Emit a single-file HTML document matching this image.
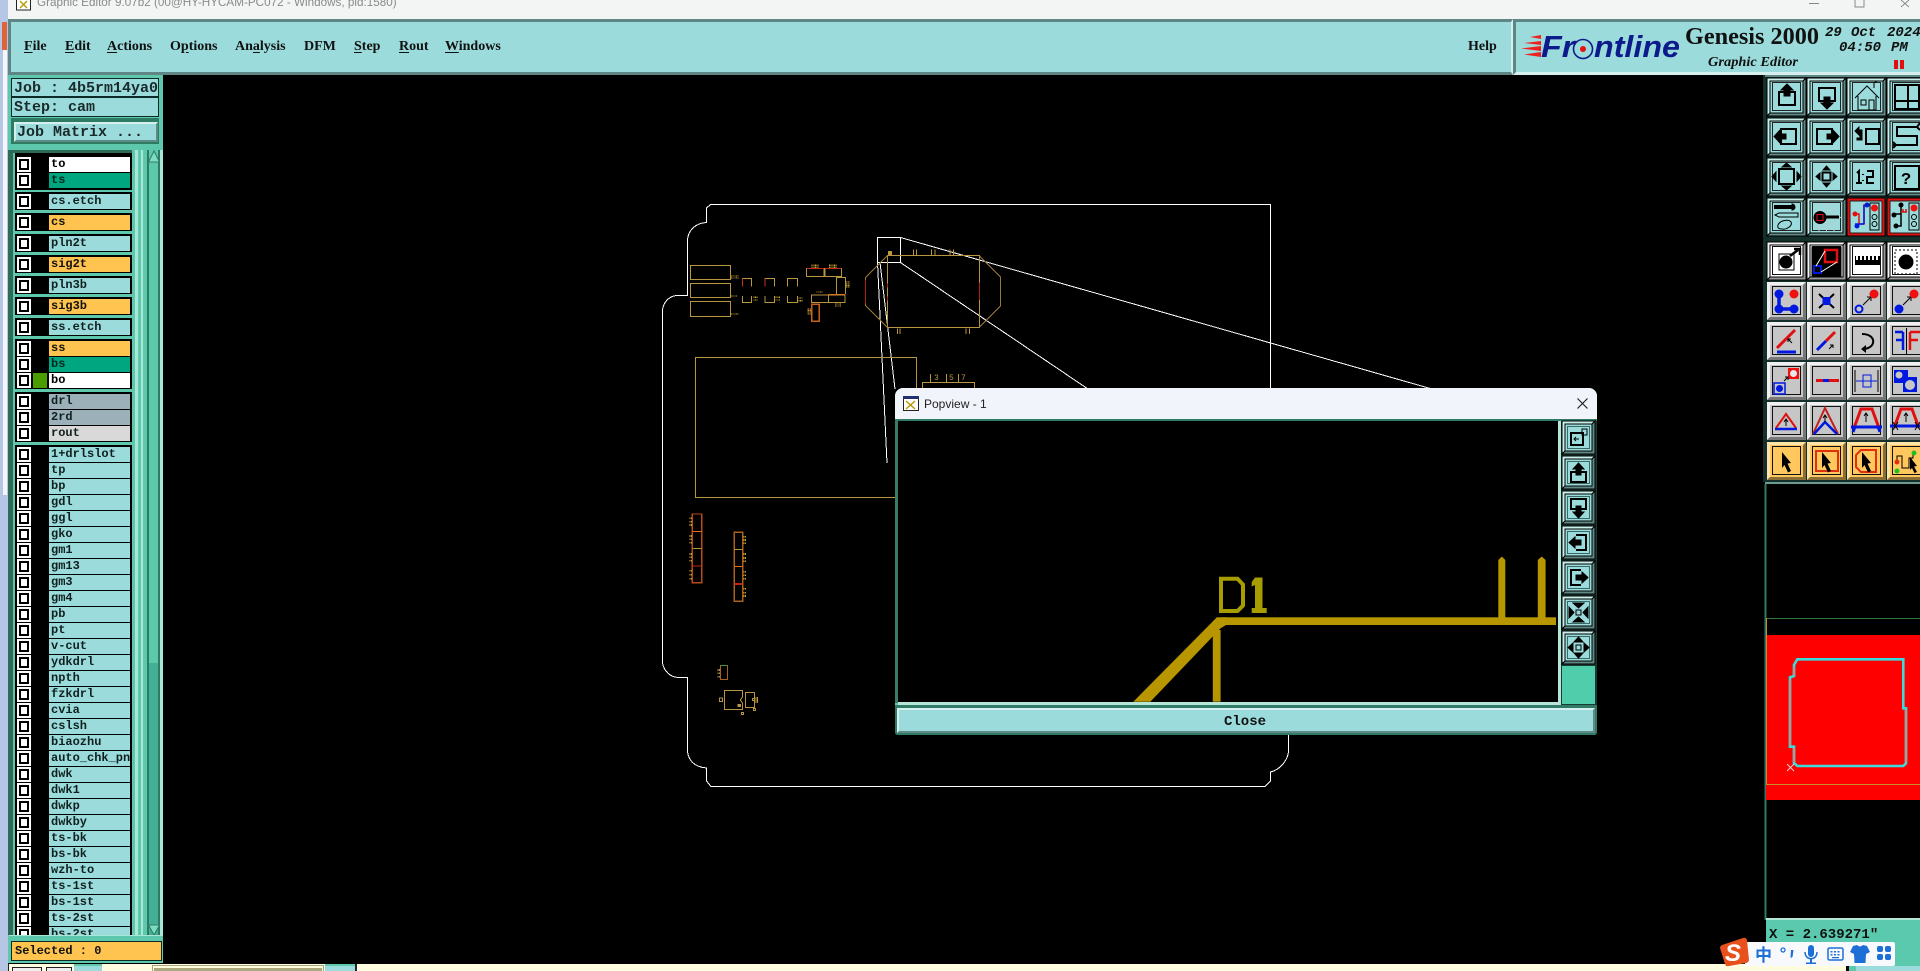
<!DOCTYPE html>
<html><head><meta charset="utf-8"><title>Graphic Editor</title>
<style>
html,body{margin:0;padding:0;width:1920px;height:971px;overflow:hidden;background:#000}
div,span,svg{position:absolute}
u{text-decoration:underline;text-underline-offset:2px}
.m{font:bold 14px "Liberation Serif",serif;color:#111;top:39px;white-space:nowrap}
.mono{font:bold 15px "Liberation Mono",monospace;color:#1a2a2a;white-space:pre}
.g{left:15px;width:117px;background:#000}
.r{left:0;width:132px;height:15px}
.r i{position:absolute;left:17px;top:0;width:14px;height:14.5px;background:#fff}
.r i:after{content:"";position:absolute;left:2px;top:2px;width:6px;height:6.5px;border:2px solid #000;background:#fff}
.r b{position:absolute;left:49px;top:0;width:79px;height:14.5px;padding-left:2px;background:#9bdbdb;overflow:hidden;font:bold 12px/15px "Liberation Mono",monospace;color:#10201f;white-space:pre}
.r b.w{background:#fff;color:#000}
.r b.t{background:#00a680;color:#00281e}
.r b.y{background:#ffc44f;color:#111}
.r b.s{background:#9bb0b8}
.r b.e{background:#d9d9d9}
</style></head>
<body>
<!-- left desktop strip -->
<div style="left:0;top:0;width:8px;height:971px;background:#b5c7e5"></div>
<div style="left:3px;top:50px;width:4px;height:445px;background:#f4f6fa"></div>
<div style="left:2px;top:22px;width:5px;height:28px;background:#e0643a"></div>
<!-- title bar -->
<div style="left:8px;top:0;width:1912px;height:19px;background:#f3f4f4;overflow:hidden">
  <span style="left:29px;top:-7px;font:11.7px/20px 'Liberation Sans',sans-serif;color:#8a8a8a;white-space:nowrap">Graphic Editor 9.07b2 (00@HY-HYCAM-PC072 - Windows, pid:1580)</span>
  <svg style="left:8px;top:0" width="16" height="12"><rect x=".5" y="-3" width="14" height="13" fill="#fff" stroke="#222"/><path d="M4 1L11 8M11 1L4 8" stroke="#b89a00" stroke-width="1.4"/></svg>
  <svg style="left:1790px;top:0" width="122" height="10"><path d="M11 3.5H21M57 0V7H66V0M103 0L111 7M111 0L103 7" fill="none" stroke="#888"/></svg>
</div>
<!-- menu bar -->
<div style="left:8px;top:19px;width:1505px;height:56px;background:#9bdbdb;box-sizing:border-box;border-top:3px solid #5f8585;border-left:3px solid #5f8585;border-bottom:3px solid #5f8585;border-right:2px solid #d5f0ee"></div>
<div class="m" style="left:24px"><u>F</u>ile</div>
<div class="m" style="left:65px"><u>E</u>dit</div>
<div class="m" style="left:107px"><u>A</u>ctions</div>
<div class="m" style="left:170px">O<u>p</u>tions</div>
<div class="m" style="left:235px">An<u>a</u>lysis</div>
<div class="m" style="left:304px">DFM</div>
<div class="m" style="left:354px"><u>S</u>tep</div>
<div class="m" style="left:399px"><u>R</u>out</div>
<div class="m" style="left:445px"><u>W</u>indows</div>
<div class="m" style="left:1468px">Help</div>
<!-- logo panel -->
<div style="left:1513px;top:19px;width:407px;height:56px;background:#9bdbdb;box-sizing:border-box;border-top:3px solid #5f8585;border-left:3px solid #5f8585;border-bottom:3px solid #d5f0ee"></div>
<svg style="left:1516px;top:19px" width="404" height="56" viewBox="1516 19 404 56">
  <path d="M1541 35L1530 37L1541 39ZM1541 41L1524 43L1541 45ZM1541 46L1521 48.500L1541 51ZM1541 52L1524 54.500L1541 57Z" fill="#f02020"/>
  <text x="1541" y="57" font-family="Liberation Sans" font-weight="bold" font-style="italic" font-size="31" fill="#0c1a8c" textLength="34" lengthAdjust="spacingAndGlyphs">Fr</text>
  <circle cx="1583" cy="49" r="9.500" fill="none" stroke="#0c1a8c" stroke-width="1.600"/><circle cx="1583" cy="49" r="3" fill="#e81010"/>
  <text x="1594" y="57" font-family="Liberation Sans" font-weight="bold" font-style="italic" font-size="31" fill="#0c1a8c" textLength="86" lengthAdjust="spacingAndGlyphs">ntline</text>
  <text x="1685" y="44" font-family="Liberation Serif" font-weight="bold" font-size="24" fill="#111" textLength="134" lengthAdjust="spacingAndGlyphs">Genesis 2000</text>
  <text x="1708" y="66" font-family="Liberation Serif" font-weight="bold" font-style="italic" font-size="14" fill="#111" textLength="90" lengthAdjust="spacingAndGlyphs">Graphic Editor</text>
  <g font-family="Liberation Mono" font-style="italic" font-weight="bold" font-size="14" fill="#111">
    <text x="1825" y="36">29</text><text x="1851" y="36">Oct</text><text x="1887" y="36">2024</text>
    <text x="1839" y="51">04:50</text><text x="1891" y="51">PM</text>
  </g>
  <rect x="1894" y="60" width="4" height="9" fill="#e01010"/><rect x="1900" y="60" width="4" height="9" fill="#e01010"/>
</svg>

<!-- left panel -->
<div style="left:8px;top:75px;width:155px;height:888px;background:#5ec8ad"></div>
<div style="left:8px;top:150px;width:5px;height:785px;background:#2e6b57"></div>
<div style="left:8px;top:150px;width:130px;height:3px;background:#2e6b57"></div>
<div style="left:11px;top:78px;width:148px;height:19px;background:#9bdbdb;border:1px solid #0c2a26;box-sizing:border-box"></div>
<div style="left:11px;top:97px;width:148px;height:20px;background:#9bdbdb;border:1px solid #0c2a26;box-sizing:border-box"></div>
<div class="mono" style="left:14px;top:79px;line-height:19px">Job : 4b5rm14ya0</div>
<div class="mono" style="left:14px;top:98px;line-height:20px">Step: cam</div>
<div style="left:11px;top:118px;width:148px;height:26px;background:#2e7b63"></div>
<div style="left:14px;top:122px;width:144px;height:20px;background:#9bdbdb;box-sizing:border-box;border-top:2px solid #d5f0ee;border-left:2px solid #d5f0ee;border-bottom:2px solid #5f8a86;border-right:2px solid #5f8a86"></div>
<div class="mono" style="left:17px;top:123px;line-height:20px">Job Matrix ...</div>

<!-- scrollbar columns -->
<div style="left:132px;top:150px;width:31px;height:785px;background:#5ec8ad"></div>
<div style="left:135px;top:150px;width:3px;height:785px;background:#a8e6d8"></div>
<div style="left:141px;top:150px;width:2px;height:785px;background:#a8e6d8"></div>
<div style="left:147px;top:150px;width:2px;height:785px;background:#2e7b63"></div>
<div style="left:158px;top:150px;width:2px;height:785px;background:#2e7b63"></div>
<div style="left:160px;top:150px;width:3px;height:785px;background:#a8e6d8"></div>
<div style="left:149px;top:663px;width:9px;height:272px;background:#45ae96"></div>
<svg style="left:147px;top:150px" width="14" height="16"><path d="M7 1L12.500 12H1.500Z" fill="#7edcc4" stroke="#2e7b63"/></svg>
<svg style="left:147px;top:924px" width="14" height="12"><path d="M7 11L12.500 1H1.500Z" fill="#7edcc4" stroke="#2e7b63"/></svg>

<!-- layer rows -->
<div style="left:0;top:150px;width:132px;height:785px;overflow:hidden">
<div style="left:0;top:0;width:132px;height:785px">
<div class="g" style="top:3px;height:37px"></div>
<div class="g" style="top:42px;height:18px"></div>
<div class="g" style="top:63px;height:18px"></div>
<div class="g" style="top:84px;height:18px"></div>
<div class="g" style="top:105px;height:18px"></div>
<div class="g" style="top:126px;height:18px"></div>
<div class="g" style="top:147px;height:18px"></div>
<div class="g" style="top:168px;height:18px"></div>
<div class="g" style="top:189px;height:50px"></div>
<div class="g" style="top:242px;height:50px"></div>
<div class="g" style="top:295px;height:490px"></div>
<div class="r" style="top:7px"><i></i><b class="w">to</b></div>
<div class="r" style="top:23px"><i></i><b class="t">ts</b></div>
<div class="r" style="top:44px"><i></i><b>cs.etch</b></div>
<div class="r" style="top:65px"><i></i><b class="y">cs</b></div>
<div class="r" style="top:86px"><i></i><b>pln2t</b></div>
<div class="r" style="top:107px"><i></i><b class="y">sig2t</b></div>
<div class="r" style="top:128px"><i></i><b>pln3b</b></div>
<div class="r" style="top:149px"><i></i><b class="y">sig3b</b></div>
<div class="r" style="top:170px"><i></i><b>ss.etch</b></div>
<div class="r" style="top:191px"><i></i><b class="y">ss</b></div>
<div class="r" style="top:207px"><i></i><b class="t">bs</b></div>
<div class="r" style="top:223px"><i></i><b class="w">bo</b></div>
<div style="left:33px;top:223px;width:14px;height:14.500px;background:#4b9c00"></div>
<div class="r" style="top:244px"><i></i><b class="s">drl</b></div>
<div class="r" style="top:260px"><i></i><b class="s">2rd</b></div>
<div class="r" style="top:276px"><i></i><b class="e">rout</b></div>
<div class="r" style="top:297px"><i></i><b>1+drlslot</b></div>
<div class="r" style="top:313px"><i></i><b>tp</b></div>
<div class="r" style="top:329px"><i></i><b>bp</b></div>
<div class="r" style="top:345px"><i></i><b>gdl</b></div>
<div class="r" style="top:361px"><i></i><b>ggl</b></div>
<div class="r" style="top:377px"><i></i><b>gko</b></div>
<div class="r" style="top:393px"><i></i><b>gm1</b></div>
<div class="r" style="top:409px"><i></i><b>gm13</b></div>
<div class="r" style="top:425px"><i></i><b>gm3</b></div>
<div class="r" style="top:441px"><i></i><b>gm4</b></div>
<div class="r" style="top:457px"><i></i><b>pb</b></div>
<div class="r" style="top:473px"><i></i><b>pt</b></div>
<div class="r" style="top:489px"><i></i><b>v-cut</b></div>
<div class="r" style="top:505px"><i></i><b>ydkdrl</b></div>
<div class="r" style="top:521px"><i></i><b>npth</b></div>
<div class="r" style="top:537px"><i></i><b>fzkdrl</b></div>
<div class="r" style="top:553px"><i></i><b>cvia</b></div>
<div class="r" style="top:569px"><i></i><b>cslsh</b></div>
<div class="r" style="top:585px"><i></i><b>biaozhu</b></div>
<div class="r" style="top:601px"><i></i><b>auto_chk_pnl</b></div>
<div class="r" style="top:617px"><i></i><b>dwk</b></div>
<div class="r" style="top:633px"><i></i><b>dwk1</b></div>
<div class="r" style="top:649px"><i></i><b>dwkp</b></div>
<div class="r" style="top:665px"><i></i><b>dwkby</b></div>
<div class="r" style="top:681px"><i></i><b>ts-bk</b></div>
<div class="r" style="top:697px"><i></i><b>bs-bk</b></div>
<div class="r" style="top:713px"><i></i><b>wzh-to</b></div>
<div class="r" style="top:729px"><i></i><b>ts-1st</b></div>
<div class="r" style="top:745px"><i></i><b>bs-1st</b></div>
<div class="r" style="top:761px"><i></i><b>ts-2st</b></div>
<div class="r" style="top:777px"><i></i><b>bs-2st</b></div>
</div></div>
<!-- selected -->
<div style="left:9px;top:935px;width:154px;height:28px;background:#5ec8ad;border-top:1px solid #a8e6d8;box-sizing:border-box"></div>
<div style="left:11px;top:941px;width:151px;height:20px;background:#ffc44f;border:1px solid #0c2a26;box-sizing:border-box"></div>
<div class="mono" style="left:15px;top:941px;font-size:12px;line-height:20px;color:#111">Selected : 0</div>

<!-- bottom strip -->
<div style="left:8px;top:964px;width:1912px;height:7px;background:#fffde0"></div>
<div style="left:8px;top:964px;width:1px;height:7px;background:#222"></div>
<div style="left:12px;top:967px;width:30px;height:4px;border-top:1px solid #222;border-left:1px solid #222;border-right:1px solid #222;box-sizing:border-box;background:#eee"></div>
<div style="left:46px;top:967px;width:26px;height:4px;border-top:1px solid #222;border-left:1px solid #222;border-right:1px solid #222;box-sizing:border-box;background:#eee"></div>
<div style="left:74px;top:964px;width:28px;height:7px;background:#9bdbdb;border-top:2px solid #5ec8ad;box-sizing:border-box"></div>
<div style="left:152px;top:965px;width:172px;height:6px;background:#fffde0;border:1px solid #a4a47a;border-bottom:0;box-sizing:border-box"></div>
<div style="left:154px;top:968px;width:168px;height:3px;background:#a8a880"></div>
<div style="left:325px;top:964px;width:30px;height:7px;background:#9bdbdb;border-top:2px solid #5ec8ad;box-sizing:border-box"></div>
<div style="left:355px;top:964px;width:2px;height:7px;background:#222"></div>
<div style="left:1846px;top:964px;width:74px;height:7px;background:#5ec8ad"></div>
<div style="left:1846px;top:966px;width:3px;height:5px;background:#000"></div>
<div style="left:1856px;top:966px;width:64px;height:5px;background:#9bdbdb"></div>

<!-- right toolbar background -->
<div style="left:1763px;top:75px;width:157px;height:407px;background:#15302a"></div>
<div style="left:1765px;top:75px;width:155px;height:2px;background:#5f8585"></div>
<div style="left:1765px;top:482px;width:155px;height:2px;background:#6f9a90"></div>

<!-- main svg: PCB + toolbar + minimap -->
<svg style="left:0;top:0" width="1920" height="971" viewBox="0 0 1920 971" fill="none">
<defs>
<g id="t"><rect width="39" height="38" fill="#9bdbdb"/><path d="M0 0H39L36 3H3V35L0 38Z" fill="#c9efec"/><path d="M39 0V38H0L3 35H36V3Z" fill="#5f8a86"/><rect x="5.500" y="4.500" width="28" height="28" stroke="#222"/></g>
<g id="a"><rect width="39" height="38" fill="#c6c6c6"/><path d="M0 0H39L36 3H3V35L0 38Z" fill="#f0f0f0"/><path d="M39 0V38H0L3 35H36V3Z" fill="#777"/><rect x="5.500" y="4.500" width="28" height="28" stroke="#111"/></g>
<g id="w"><rect width="39" height="38" fill="#fff"/><path d="M0 0H39L36 3H3V35L0 38Z" fill="#f2f2f2"/><path d="M39 0V38H0L3 35H36V3Z" fill="#999"/><rect x="5.500" y="4.500" width="28" height="28" stroke="#111"/></g>
<g id="o"><rect width="39" height="38" fill="#ffc85f"/><path d="M0 0H39L36 3H3V35L0 38Z" fill="#ffe4a8"/><path d="M39 0V38H0L3 35H36V3Z" fill="#8a6d35"/><rect x="5.500" y="4.500" width="28" height="28" stroke="#111"/></g>
<path id="cur" d="M0 0L9 11L5.500 11.500L9 19L6 20.500L2.500 13L0 16Z" fill="#000"/>
</defs>

<!-- PCB outline -->
<g stroke="#fff" stroke-width="1" shape-rendering="crispEdges">
<path d="M1270.500 389V204.500H710.500L706.500 208V222.500C695 223 688 231 687.500 240V295.500H677C669 296 663.500 302 662.500 310V663C664 671 670 677 678 677.500H687.500V752C689 761 695 767 706.500 768V781L711 786.500H1265L1270.500 781V772C1279 770 1287 762 1288.500 752V735"/>
<rect x="877.500" y="237.500" width="23" height="25"/>
<path d="M900.500 237.500L1432 389M900.500 262.500L1088 389M877.500 262.500L887 463M880 262.500L895 389"/>
</g>
<!-- PCB details (zoom 8 coord) -->
<g transform="translate(660,190) scale(.33333)" stroke="#b8963f" stroke-width="3" shape-rendering="crispEdges">
 <rect x="91" y="227" width="120" height="42"/><rect x="91" y="281" width="120" height="42"/><rect x="91" y="335" width="120" height="44"/>
 <path d="M248 290V265H275V290M248 318V338H275V318M315 290V265H343V290M315 318V338H343V318M382 290V265H412V290M382 318V338H412V318"/>
 <path d="M248 265V290M315 265V290" stroke="#c83018"/>
 <rect x="440" y="235" width="52" height="25"/><rect x="495" y="235" width="50" height="25"/>
 <path d="M440 236H492M495 236H545" stroke="#c02810"/>
 <path d="M530 312V262H557V312"/>
 <rect x="455" y="315" width="50" height="22"/><rect x="505" y="315" width="50" height="22"/>
 <path d="M505 314H555" stroke="#e87018"/>
 <rect x="455" y="343" width="23" height="51" stroke="#c8601a" stroke-width="4"/>
 <rect x="682" y="197" width="276" height="215"/>
 <path d="M682 197L617 262V347L682 412M958 197L1022 262V347L958 412" stroke="#9a7a35"/>
 <path d="M760 178V195M770 178V195M815 178V195M825 178V195M870 178V195M880 178V195M712 415V432M720 415V432M918 415V432M928 415V432"/>
 <path d="M617 270V340M958 278V330M682 280V292M682 320V332" stroke="#b02010"/>
 <rect x="685" y="185" width="9" height="9" fill="#c8a030"/>
 <rect x="106" y="503" width="664" height="419"/>
 <g stroke="#c8a030" stroke-width="4">
 <path d="M213 258h24M213 264h24M213 318h20M213 372h24M280 322h12M280 330h12M347 322h14M347 330h14M415 324h16M415 332h16M455 226h22M455 232h22M507 226h24M507 232h24M470 306h20M525 342h20M525 348h20M560 275v20M566 275v20M445 355v20M451 355v20" stroke-dasharray="3 2"/>
 </g>
</g>
<!-- above popup bit -->
<g stroke="#b8963f" stroke-width="1" shape-rendering="crispEdges"><path d="M922.500 389V382.500H974.500V389M930.500 382V374M946.500 382V374M958.500 382V374"/></g>
<g font-family="Liberation Mono" font-size="8" fill="#b8963f"><text x="934" y="380">3</text><text x="949" y="380">5</text><text x="961" y="380">7</text></g>
<!-- lower parts zoom 9 coord -->
<g transform="translate(660,490) scale(.33333)" stroke="#b8963f" stroke-width="3" shape-rendering="crispEdges">
 <rect x="97" y="72" width="28" height="206" stroke="#b84a1a" stroke-width="4"/>
 <path d="M97 124H125" stroke="#e87018"/><path d="M97 175H125"/><path d="M97 228H125" stroke="#c02810"/>
 <rect x="223" y="127" width="25" height="207" stroke="#a8601a" stroke-width="4"/>
 <path d="M223 178H248"/><path d="M223 230H248" stroke="#e87018"/><path d="M223 282H248" stroke="#c02810" stroke-width="6"/>
 <path d="M88 85h9M88 95h9M88 105h9M88 138h9M88 148h9M88 158h9M88 192h9M88 202h9M88 212h9M88 242h9M88 254h9M88 266h9M250 140h10M250 150h10M250 160h10M250 192h10M250 204h10M250 214h10M250 245h10M250 256h10M250 266h10M250 296h10M250 308h10M250 318h10" stroke-dasharray="3 2" stroke="#c8a030" stroke-width="5"/>
 <rect x="181" y="527" width="22" height="42" stroke="#a8601a"/><path d="M181 527H203" stroke="#3a9a30"/>
 <path d="M172 540h8M172 550h8M172 560h8" stroke-dasharray="3 2" stroke-width="5"/>
 <path d="M193 601H248V620L241 630L248 640V659H193Z"/>
 <rect x="256" y="607" width="28" height="46"/>
 <rect x="245" y="667" width="6" height="6"/><rect x="280" y="655" width="6" height="6"/>
 <rect x="178" y="624" width="10" height="10"/><rect x="234" y="643" width="8" height="7" fill="#b8963f"/><rect x="278" y="626" width="6" height="6"/>
 <path d="M286 624h10M286 630h10M286 636h10" stroke-dasharray="3 2" stroke-width="5"/>
</g>

<!-- minimap -->
<path d="M1765.500 484V920" stroke="#2f7b66" stroke-width="2"/>
<rect x="1766" y="635" width="154" height="165" fill="#fe0000"/>
<path d="M1766.500 618.500H1920" stroke="#2e7a3a"/>
<path d="M1766.500 618V784.500H1920" stroke="#c89020"/>
<path d="M1797.300 659.300H1903.300V708.300H1906V763.300L1903.300 766H1797.300L1794 763V746.700H1790V677.300L1794 676V665Z" stroke="#39dcdc" stroke-width="2.600"/>
<path d="M1794 668V675M1790 680V745M1794 748V762M1906 710V762" stroke="#a0a0a0" stroke-width="2.600"/>
<path d="M1787 764L1794 771M1794 764L1787 771" stroke="#f0d0d0"/>
<rect x="1766" y="918" width="154" height="46" fill="#5ac9ad"/>
<rect x="1766" y="918" width="154" height="2" fill="#b5e6d8"/>
<text x="1769" y="938" font-family="Liberation Mono" font-weight="bold" font-size="14" fill="#111">X = 2.639271"</text>

<!-- toolbar block 1 -->
<g stroke="#000" fill="none">
<g transform="translate(1767,78)"><use href="#t"/><rect x="12" y="14" width="16" height="13" stroke-width="2"/><path d="M20 6L26 12H23V18H17V12H14Z" fill="#000"/></g>
<g transform="translate(1807,78)"><use href="#t"/><rect x="12" y="10" width="16" height="13" stroke-width="2"/><path d="M20 31L26 25H23V19H17V25H14Z" fill="#000"/></g>
<g transform="translate(1847,78)"><use href="#t"/><path d="M8 20L20 8L32 20M11 18V32H29V18M14 22h5v5h-5zM22 22h5v10h-5zM27 10V5l3-2" /></g>
<g transform="translate(1887,78)"><use href="#t"/><path d="M8 7H32V31H8ZM8 23H32M21 7V31" stroke-width="2"/></g>

<g transform="translate(1767,118)"><use href="#t"/><rect x="14" y="11" width="15" height="15" stroke-width="2"/><path d="M7 18.500L13 12V16H19V21H13V25Z" fill="#000"/></g>
<g transform="translate(1807,118)"><use href="#t"/><rect x="10" y="11" width="15" height="15" stroke-width="2"/><path d="M32 18.500L26 12V16H20V21H26V25Z" fill="#000"/></g>
<g transform="translate(1847,118)"><use href="#t"/><rect x="19" y="11" width="13" height="15" stroke-width="2"/><path d="M8 13L12 9V12H15V22H10V20H13V15H12V17Z" fill="#000"/></g>
<g transform="translate(1887,118)"><use href="#t"/><path d="M30 9H10V18H30V27H6M33 5L30 9L33 12M6 24L9 27L6 30" stroke-width="2"/></g>

<g transform="translate(1767,158)"><use href="#t"/><rect x="12" y="11" width="15" height="15" stroke-width="2"/><path d="M19.500 5L24 9H15ZM19.500 32L24 28H15ZM5 18.500L9 14V23ZM34 18.500L30 14V23Z" fill="#000"/></g>
<g transform="translate(1807,158)"><use href="#t"/><rect x="15.500" y="14.500" width="8" height="8" stroke-width="2"/><path d="M19.500 8L23 12H16ZM19.500 29L23 25H16ZM9 18.500L13 15V22ZM30 18.500L26 15V22Z" fill="#000"/></g>
<g transform="translate(1847,158)"><use href="#t"/><path d="M10 15L12 13V25M9 25H15M16 16v1M16 22v1M20 13H26V19H20V25H27" stroke-width="2"/></g>
<g transform="translate(1887,158)"><use href="#t"/><rect x="8" y="8" width="24" height="23" stroke-width="2"/><text x="14" y="26" font-family="Liberation Mono" font-weight="bold" font-size="17" fill="#000" stroke="none">?</text></g>

<g transform="translate(1767,198)"><use href="#t"/><path d="M7 8H25M7 10H25" stroke-width="2"/><path d="M25 6a3 3 0 1 1 0 6z" fill="#000"/><path d="M8 17L12 15H31V19H12ZM11 27C13 22 22 21 24 24C26 28 19 32 15 31C12 31 10 30 11 27Z"/></g>
<g transform="translate(1807,198)"><use href="#t"/><path d="M19.500 5V33M6 19.500H34M12 5V33M27 5V33" stroke="#c0c8c8"/><path d="M16 19H32" stroke-width="3"/><circle cx="13" cy="19.500" r="6" fill="#000"/><rect x="10" y="16.500" width="6" height="6" stroke="#e01010"/></g>
<g transform="translate(1847,198)"><rect width="38" height="38" fill="#e01010"/><rect x="3" y="3" width="32" height="32" fill="#9bdbdb" stroke="#222"/><path d="M7 16H12V26H17V7H20M12 16L8 16" stroke="#e01010" stroke-width="1.500"/><path d="M17 7V26M17 26H8" stroke="#0018e0" stroke-width="1.500"/><circle cx="8" cy="16" r="2.500" fill="#e01010" stroke="none"/><circle cx="20" cy="7" r="2.500" fill="#0018e0" stroke="none"/><circle cx="10" cy="28" r="2.500" fill="#0018e0" stroke="none"/><rect x="23" y="5" width="9" height="27"/><circle cx="27.500" cy="10" r="3.500" fill="#f01010" stroke="none"/><circle cx="27.500" cy="19" r="2.500"/><circle cx="27.500" cy="26" r="2.500"/></g>
<g transform="translate(1887,198)"><rect width="38" height="38" fill="#e01010"/><rect x="3" y="3" width="32" height="32" fill="#9bdbdb" stroke="#222"/><path d="M7 16H14V8M14 16V28H9" stroke="#000" stroke-width="1.500"/><path d="M14 14H20M16 14V11M19 14V11" stroke="#e01010" stroke-width="1.500"/><circle cx="7" cy="17" r="2.500" fill="#000" stroke="none"/><circle cx="14" cy="7" r="2.500" fill="#000" stroke="none"/><circle cx="9" cy="28" r="2.500" fill="#000" stroke="none"/><rect x="22" y="5" width="10" height="27"/><circle cx="27" cy="10" r="3.500" fill="#f01010" stroke="none"/><circle cx="27" cy="19" r="2.500"/><circle cx="27" cy="26" r="2.500"/></g>

<!-- block 2 -->
<g transform="translate(1767,242)"><use href="#w"/><rect x="12" y="12" width="15" height="16"/><circle cx="19" cy="20" r="6" fill="#000"/><path d="M23 14L31 8M27 7H33V13" stroke-width="2.500"/></g>
<g transform="translate(1807,242)"><use href="#w"/><rect x="5" y="5" width="29" height="29" fill="#000"/><rect x="18" y="8" width="12" height="12" stroke="#e01010" stroke-width="2.500"/><rect x="7" y="24" width="7" height="7" stroke="#0018e0" stroke-width="2"/><path d="M9 24L18 9M14 30L30 20" stroke="#fff"/></g>
<g transform="translate(1847,242)"><use href="#w"/><path d="M8 14V23H33V14H31V18H29V14H27V18H25V14H23V18H21V14H19V18H17V14H15V18H13V14H11V18H9V14Z" fill="#000" stroke="none"/></g>
<g transform="translate(1887,242)"><use href="#w"/><rect x="8" y="8" width="22" height="24" stroke-dasharray="2 2"/><circle cx="19" cy="20" r="7" fill="#000"/></g>

<g stroke="none">
<g transform="translate(1767,282)"><use href="#a"/><path d="M12 12V27H27" stroke="#0018e0" stroke-width="3.500"/><circle cx="12" cy="12" r="4.500" fill="#0018e0"/><circle cx="27" cy="12" r="4.500" fill="#f01010"/><circle cx="12" cy="27" r="4.500" fill="#0018e0"/><circle cx="27" cy="27" r="4.500" fill="#0018e0"/></g>
<g transform="translate(1807,282)"><use href="#a"/><path d="M12 12L27 26M27 12L12 26" stroke="#000" stroke-width="2"/><rect x="15.500" y="15" width="8" height="8" fill="#0018e0"/></g>
<g transform="translate(1847,282)"><use href="#a"/><circle cx="12" cy="27" r="3.500" stroke="#0018e0" stroke-width="2" fill="none"/><path d="M16 23L24 15M20 15H24V19" stroke="#000"/><circle cx="27" cy="12" r="4.500" fill="#f01010"/></g>
<g transform="translate(1887,282)"><use href="#a"/><circle cx="12" cy="27" r="4.500" fill="#0018e0"/><path d="M16 23L24 15M20 15H24V19" stroke="#000"/><circle cx="27" cy="12" r="4.500" fill="#f01010"/></g>

<g transform="translate(1767,322)"><use href="#a"/><path d="M10 26L28 8" stroke="#e01010" stroke-width="3"/><path d="M10 30H29" stroke="#0018e0" stroke-width="3"/><path d="M25 21L21 17M21 20V17H24" stroke="#000"/></g>
<g transform="translate(1807,322)"><use href="#a"/><path d="M10 28L19 19" stroke="#0018e0" stroke-width="3"/><path d="M19 19L28 10" stroke="#e01010" stroke-width="3"/><path d="M22 27L26 23M23 23H26V26" stroke="#000"/></g>
<g transform="translate(1847,322)"><use href="#a"/><path d="M15 12C24 12 27 17 26 21C25 25 20 27 16 27" stroke="#000" stroke-width="2" fill="none"/><path d="M19 23V31L14 27Z" fill="#000"/></g>
<g transform="translate(1887,322)"><use href="#a"/><path d="M19.500 6V33" stroke="#000"/><path d="M16 10H8M16 18H9M16 10V28" stroke="#0018e0" stroke-width="2.500"/><path d="M23 10H33M23 18H31M23 10V28" stroke="#e01010" stroke-width="2.500"/></g>

<g transform="translate(1767,362)"><use href="#a"/><rect x="21" y="6" width="11" height="11" fill="#f01010"/><circle cx="26.500" cy="11.500" r="3.500" fill="#e8e8e8"/><rect x="7" y="21" width="11" height="11" fill="none" stroke="#0018e0" stroke-width="1.500"/><circle cx="12.500" cy="26.500" r="3.500" fill="#0018e0"/><path d="M17 19L21 15M18 15H21V18" stroke="#000"/></g>
<g transform="translate(1807,362)"><use href="#a"/><path d="M9 18.500H32" stroke="#e01010" stroke-width="3"/><path d="M16 18.500H22" stroke="#0018e0" stroke-width="3"/></g>
<g transform="translate(1847,362)"><use href="#a"/><path d="M8 8V30M31 8V30" stroke="#000"/><path d="M9 19H30" stroke="#0018e0"/><rect x="16" y="13" width="8" height="12" fill="none" stroke="#0018e0"/></g>
<g transform="translate(1887,362)"><use href="#a"/><rect x="7" y="8" width="14" height="13" fill="#0018e0"/><rect x="16" y="15" width="14" height="15" fill="#0018e0"/><circle cx="12" cy="13" r="3.500" fill="#c6c6c6"/><circle cx="23" cy="23" r="5" fill="#c6c6c6"/></g>

<g transform="translate(1767,402)"><use href="#a"/><path d="M9 26L19 12L29 26" fill="none" stroke="#e01010" stroke-width="2"/><path d="M8 27H30" stroke="#0018e0" stroke-width="2.500"/><path d="M19 24V18M17 20L19 17L21 20" stroke="#000"/></g>
<g transform="translate(1807,402)"><use href="#a"/><path d="M6 32L18 6L31 32" fill="none" stroke="#c02020" stroke-width="2"/><path d="M7 32L18 20L30 32" fill="none" stroke="#0018e0" stroke-width="2.500"/><path d="M18 20V14M16 16L18 13L20 16" stroke="#000"/></g>
<g transform="translate(1847,402)"><use href="#a"/><path d="M7 26L14 7H25L32 26" fill="none" stroke="#e01010" stroke-width="3"/><path d="M4 25H35M6 30L8 25M33 30L31 25" fill="none" stroke="#0018e0" stroke-width="3"/><path d="M19 20V12M17 14L19 11L21 14" stroke="#000"/></g>
<g transform="translate(1887,402)"><use href="#a"/><path d="M7 26L14 7H25L32 26" fill="none" stroke="#e01010" stroke-width="3"/><path d="M3 24H36" stroke="#0018e0" stroke-width="3"/><path d="M6 20L11 28M11 20L6 28M28 20L33 28M33 20L28 28" stroke="#000"/><path d="M19 20V12M17 14L19 11L21 14" stroke="#000"/></g>

<g transform="translate(1767,442)"><use href="#o"/><use href="#cur" x="15" y="10"/></g>
<g transform="translate(1807,442)"><use href="#o"/><rect x="9" y="9" width="22" height="20" fill="none" stroke="#e03010" stroke-width="2"/><use href="#cur" x="15" y="10"/></g>
<g transform="translate(1847,442)"><use href="#o"/><path d="M14 8H29V30H14L9 25V13Z" fill="none" stroke="#e03010" stroke-width="2"/><use href="#cur" x="15" y="10"/></g>
<g transform="translate(1887,442)"><use href="#o"/><path d="M10 22V14H15V26H22V16H26V10" fill="none" stroke="#000"/><circle cx="10" cy="20" r="2.500" fill="#e03010"/><circle cx="10" cy="29" r="2.500" fill="#20c020"/><circle cx="27" cy="11" r="2.500" fill="#20c020"/><path d="M23 15L30 24L27 24.500L30 30L27.500 31L25 26L23 28Z" fill="#000"/></g>
</g>
</g>
</svg>

<!-- popup -->
<div style="left:895px;top:388px;width:702px;height:347px;background:#5ec8ad;border-radius:8px 8px 3px 3px;overflow:hidden">
  <div style="left:0;top:0;width:702px;height:31px;background:#f1f4fb"></div>
  <svg style="left:8px;top:8px" width="16" height="15"><rect x=".5" y=".5" width="15" height="14" fill="#fff" stroke="#222"/><rect x="0" y="0" width="16" height="3" fill="#223070"/><path d="M3 5L12 13M12 5L3 13" stroke="#b89a00" stroke-width="1.500"/></svg>
  <span style="left:29px;top:8px;font:12px/16px 'Liberation Sans',sans-serif;color:#222;white-space:nowrap">Popview - 1</span>
  <svg style="left:681px;top:9px" width="13" height="13"><path d="M1.500 1.500L11.500 11.500M11.500 1.500L1.500 11.500" stroke="#222" stroke-width="1.200"/></svg>
  <div style="left:0;top:31px;width:702px;height:2px;background:#2f7b66"></div>
  <div style="left:0;top:33px;width:3px;height:282px;background:#3a7b6a"></div>
  <div style="left:3px;top:33px;width:660px;height:281px;background:#000"></div>
  <div style="left:3px;top:314px;width:663px;height:3px;background:#b5e6d8"></div>
  <div style="left:663px;top:33px;width:3px;height:284px;background:#b5e6d8"></div>
  <div style="left:666px;top:33px;width:36px;height:284px;background:#1c3a34"></div>
  <div style="left:667px;top:278px;width:33px;height:38px;background:#50cdaa"></div>
  <div style="left:0;top:317px;width:702px;height:30px;background:#2f7b66"></div>
  <div style="left:2px;top:320px;width:698px;height:25px;background:#9bdbdb;box-sizing:border-box;border-top:2px solid #d5f0ee;border-left:2px solid #d5f0ee;border-bottom:2px solid #5f8a86;border-right:2px solid #5f8a86"></div>
  <span style="left:329px;top:326px;font:14px/16px 'Liberation Mono',monospace;color:#111;font-weight:bold">Close</span>
</div>
<svg style="left:895px;top:388px" width="702" height="347" viewBox="895 388 702 347" fill="none">
 <defs><g id="p"><rect width="33" height="33" fill="#9bdbdb"/><path d="M0 0H33L30 3H3V30L0 33Z" fill="#c9efec"/><path d="M33 0V33H0L3 30H30V3Z" fill="#5f8a86"/><rect x="5.500" y="5.500" width="22" height="22" stroke="#3a6a66"/></g></defs>
 <!-- traces -->
 <g fill="#b89600">
  <rect x="1223" y="617.300" width="333" height="7.700"/>
  <path d="M1498.300 560L1501.800 556.500L1505.300 560V618H1498.300Z"/>
  <path d="M1537.800 560L1541.700 556.500L1545.600 560V618H1537.800Z"/>
  <path d="M1216.900 617.300H1226.100V625L1220.600 628.300L1150.300 701.700H1133.300Z"/>
  <rect x="1212.800" y="630" width="7.800" height="71.700"/>
 </g>
 <path d="M1221 578.700H1237.500L1243 584.500V605.500L1237.500 611H1221Z" stroke="#a79c00" stroke-width="4"/>
 <path d="M1255 577.500H1262.500V608H1266.700V613H1251.700V608H1255V585L1251.700 586.500V582Z" fill="#a79c00"/>
 <!-- toolbar -->
 <g stroke="#000" fill="none">
 <g transform="translate(1562,421)"><use href="#p"/><rect x="9" y="12" width="12" height="12" stroke-width="2"/><rect x="20" y="8" width="5" height="6" stroke-width="1"/><path d="M12 18H17M14 16L12 18L14 20"/></g>
 <g transform="translate(1562,456)"><use href="#p"/><rect x="9" y="16" width="15" height="10" stroke-width="2"/><path d="M16.500 7L22 13H19V19H14V13H11Z" fill="#000"/></g>
 <g transform="translate(1562,491)"><use href="#p"/><rect x="9" y="8" width="15" height="10" stroke-width="2"/><path d="M16.500 27L22 21H19V15H14V21H11Z" fill="#000"/></g>
 <g transform="translate(1562,526)"><use href="#p"/><path d="M14 9H24V24H14" stroke-width="2"/><path d="M7 16.500L13 11V14H19V19H13V22Z" fill="#000"/></g>
 <g transform="translate(1562,561)"><use href="#p"/><path d="M19 9H9V24H19" stroke-width="2"/><path d="M26 16.500L20 11V14H14V19H20V22Z" fill="#000"/></g>
 <g transform="translate(1562,596)"><use href="#p"/><rect x="14" y="14" width="5" height="5"/><path d="M16.500 12L22 7H11ZM16.500 21L22 26H11ZM12 16.500L7 11V22ZM21 16.500L26 11V22Z" fill="#000"/></g>
 <g transform="translate(1562,631)"><use href="#p"/><rect x="14" y="14" width="5" height="5"/><path d="M16.500 6L21 11H12ZM16.500 27L21 22H12ZM6 16.500L11 12V21ZM27 16.500L22 12V21Z" fill="#000"/></g>
 </g>
</svg>

<!-- IME bar -->
<div style="left:1745px;top:942px;width:150px;height:24px;background:#f8f9fc;border-radius:2px"></div>
<svg style="left:1718px;top:935px" width="178" height="34" viewBox="1718 935 178 34">
 <path d="M1722 945L1743 938Q1746 937 1747 940L1749 960Q1749 962 1746 963L1729 966Q1726 967 1725 964L1720 948Q1720 946 1722 945Z" fill="#e8501c"/>
 <text x="1725" y="961" font-family="Liberation Sans" font-weight="bold" font-style="italic" font-size="24" fill="#fff">S</text>
 <text x="1755" y="961" font-family="Liberation Sans,Noto Sans CJK SC,sans-serif" font-weight="bold" font-size="17" fill="#1d6fd6">中</text>
 <g fill="#1d6fd6">
  <circle cx="1783" cy="950" r="2" fill="none" stroke="#1d6fd6" stroke-width="1.300"/>
  <path d="M1791 950H1793.500L1792.500 957L1790.500 958Z"/>
  <rect x="1808" y="945" width="6" height="12" rx="3"/>
  <path d="M1805 952C1805 961 1817 961 1817 952" fill="none" stroke="#1d6fd6" stroke-width="1.500"/><rect x="1810" y="959" width="2" height="4"/><rect x="1806" y="962.500" width="10" height="1.500"/>
  <rect x="1828" y="948" width="15" height="12" rx="1.500" fill="none" stroke="#1d6fd6" stroke-width="1.500"/>
  <path d="M1830.500 951h2v1.500h-2zM1834 951h2v1.500h-2zM1837.500 951h2v1.500h-2zM1830.500 954h2v1.500h-2zM1834 954h2v1.500h-2zM1837.500 954h2v1.500h-2zM1832 957h7v1.200h-7z"/>
  <path d="M1853 946L1857 945Q1860 948 1863 945L1867 946L1870 952L1866 954L1865.500 963H1854.500L1854 954L1850 952Z"/>
  <rect x="1877" y="946" width="6" height="6" rx="2"/><rect x="1885" y="946" width="6" height="6" rx="2"/><rect x="1877" y="954" width="6" height="6" rx="2"/><rect x="1885" y="954" width="6" height="6" rx="2"/>
 </g>
</svg>
</body></html>
